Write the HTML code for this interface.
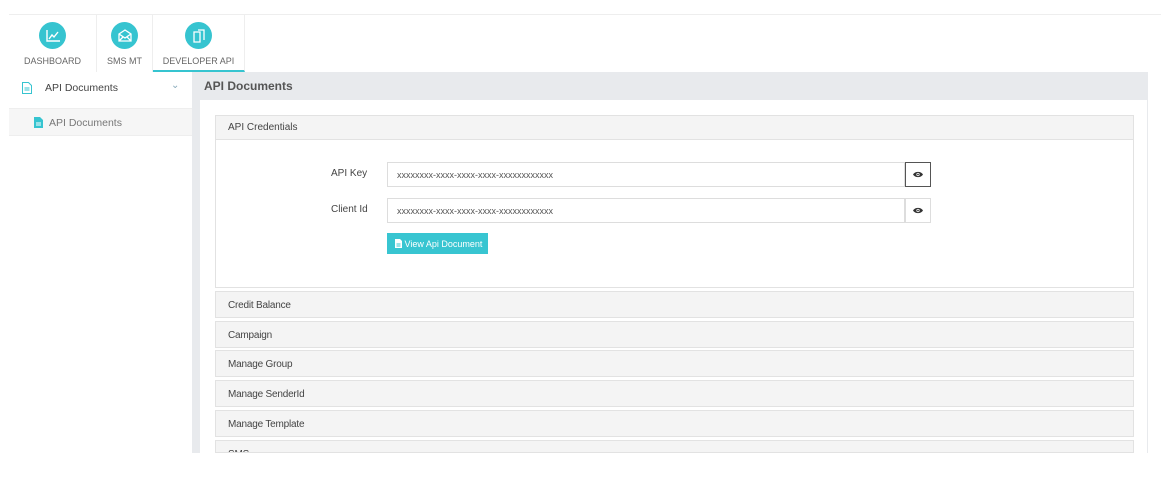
<!DOCTYPE html><html><head><style>
*{box-sizing:border-box;margin:0;padding:0}
body{width:1161px;height:480px;background:#fff;font-family:"Liberation Sans",sans-serif;position:relative;overflow:hidden;color:#333}
.a{position:absolute}
.tab{position:absolute;top:15px;height:57px;border-right:1px solid #eee;text-align:center;font-size:9px;color:#666}
.tab .c{width:27px;height:27px;border-radius:50%;background:#36c4d0;margin:7px auto 0;display:flex;align-items:center;justify-content:center}
.tab span{display:block;margin-top:7px}
.acc{position:absolute;left:215px;width:919px;height:27px;background:#f4f4f4;border:1px solid #e2e2e2;font-size:10px;color:#444;padding:8px 0 0 12px;letter-spacing:-.2px}
.inp{position:absolute;left:387px;width:518px;height:25px;border:1px solid #ddd;font-size:9px;color:#555;padding:7px 0 0 9px}
.eye{position:absolute;left:905px;width:26px;height:25px;border:1px solid #ddd;display:flex;align-items:center;justify-content:center}
</style></head><body>
<div class="a" style="left:9px;top:14px;width:1152px;height:1px;background:#eee"></div>
<div class="tab" style="left:9px;width:88px"><div class="c"><svg width="14" height="12" viewBox="0 0 14 12" fill="none" stroke="#fff" stroke-width="1.4"><path d="M1 0v11h13"/><path d="M3 9l3-4 2 2 4-5"/></svg></div><span>DASHBOARD</span></div>
<div class="tab" style="left:97px;width:56px"><div class="c"><svg width="14" height="13" viewBox="0 0 14 13" fill="none" stroke="#fff" stroke-width="1.3"><path d="M1 5l6-4 6 4v7H1z"/><path d="M1 5l6 4 6-4M1 12l4-4M13 12l-4-4"/></svg></div><span>SMS MT</span></div>
<div class="tab" style="left:153px;width:92px;border-bottom:2px solid #36c4d0"><div class="c"><svg width="14" height="14" viewBox="0 0 14 14" fill="none" stroke="#fff" stroke-width="1.3"><path d="M2 3h6v10H2z"/><path d="M6 1h6v10"/></svg></div><span>DEVELOPER API</span></div>
<div class="a" style="left:9px;top:72px;width:183px;height:36px;font-size:10.5px;color:#444;padding:10px 0 0 36px">API Documents<span style="position:absolute;left:162px;top:8px;color:#8ab;font-size:10px">&#8964;</span>
<svg class="a" style="left:13px;top:10px" width="10" height="12" viewBox="0 0 10 12" fill="none" stroke="#36c4d0"><path d="M.5.5h6l3 3v8h-9z"/><path d="M2.5 6h5M2.5 8h5"/></svg></div>
<div class="a" style="left:9px;top:108px;width:183px;height:28px;background:#f6f6f6;border-top:1px solid #eee;border-bottom:1px solid #eee;font-size:10.5px;color:#777;padding:8px 0 0 40px">API Documents
<svg class="a" style="left:25px;top:8px" width="9" height="11" viewBox="0 0 9 11"><path d="M0 0h6l3 3v8H0z" fill="#36c4d0"/><path d="M2 6h5M2 8h5" stroke="#fff"/></svg></div>
<div class="a" style="left:192px;top:72px;width:956px;height:381px;background:#e8eaed"></div>
<div class="a" style="left:204px;top:79px;font-size:12px;font-weight:bold;color:#555">API Documents</div>
<div class="a" style="left:200px;top:100px;width:947px;height:353px;background:#fff"></div>
<div class="a" style="left:215px;top:115px;width:919px;height:173px;border:1px solid #e2e2e2"></div>
<div class="a" style="left:216px;top:116px;width:917px;height:24px;background:#f4f4f4;border-bottom:1px solid #e2e2e2;font-size:10px;color:#444;padding:6px 0 0 12px">API Credentials</div>
<div class="a" style="left:331px;top:168px;font-size:10px;color:#444">API Key</div>
<div class="a" style="left:331px;top:204px;font-size:10px;color:#444">Client Id</div>
<div class="inp" style="top:162px">xxxxxxxx-xxxx-xxxx-xxxx-xxxxxxxxxxxx</div>
<div class="eye" style="top:162px;border-color:#555"><svg width="10" height="7" viewBox="0 0 10 7"><path d="M0 3.5C2 0 8 0 10 3.5 8 7 2 7 0 3.5z" fill="#333"/><circle cx="5" cy="3.5" r="1.6" fill="#fff"/><circle cx="5" cy="3.5" r=".9" fill="#333"/></svg></div>
<div class="inp" style="top:198px">xxxxxxxx-xxxx-xxxx-xxxx-xxxxxxxxxxxx</div>
<div class="eye" style="top:198px"><svg width="10" height="7" viewBox="0 0 10 7"><path d="M0 3.5C2 0 8 0 10 3.5 8 7 2 7 0 3.5z" fill="#333"/><circle cx="5" cy="3.5" r="1.6" fill="#fff"/><circle cx="5" cy="3.5" r=".9" fill="#333"/></svg></div>
<div class="a" style="left:387px;top:233px;width:101px;height:21px;background:#38c5d1;color:#fff;font-size:9px;padding:6px 0 0 8px"><svg width="7" height="9" viewBox="0 0 7 9" style="vertical-align:-1px"><path d="M0 0h5l2 2v7H0z" fill="#fff"/><path d="M1.5 5h4M1.5 7h4" stroke="#38c5d1"/></svg> View Api Document</div>
<div class="acc" style="top:291px">Credit Balance</div>
<div class="acc" style="top:321px">Campaign</div>
<div class="acc" style="top:350px">Manage Group</div>
<div class="acc" style="top:380px">Manage SenderId</div>
<div class="acc" style="top:410px">Manage Template</div>
<div class="acc" style="top:440px;height:13px;overflow:hidden">SMS</div>
<div class="a" style="left:0;top:453px;width:1161px;height:27px;background:#fff"></div>
</body></html>
